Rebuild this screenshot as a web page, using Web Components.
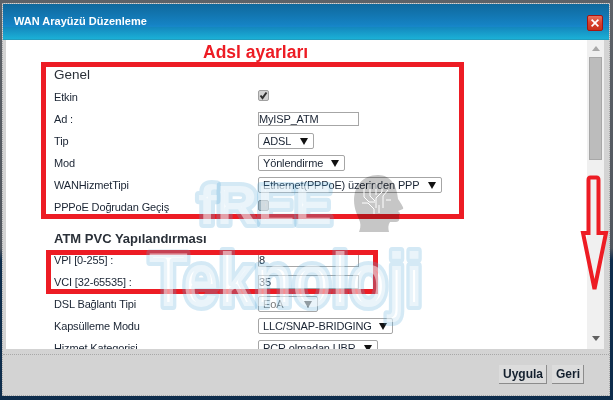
<!DOCTYPE html>
<html lang="tr">
<head>
<meta charset="utf-8">
<title>WAN Arayüzü Düzenleme</title>
<style>
html, body { margin: 0; height: 400px; overflow: hidden; }
body {
    box-sizing: border-box;
    padding-top: 3px;
    background: linear-gradient(#5d6268 0, #50565e 62%, #0e2d4c 65%);
    font-family: "Liberation Sans", Arial, sans-serif;
    position: relative;
}
</style>
</head>
<body>
<wan-dialog heading="WAN Arayüzü Düzenleme">
  <section-title>Genel</section-title>
  <form-row label="Etkin"><check-box checked></check-box></form-row>
  <form-row label="Ad :"><text-box width="101">MyISP_ATM</text-box></form-row>
  <form-row label="Tip"><select-box width="56">ADSL</select-box></form-row>
  <form-row label="Mod"><select-box width="87">Yönlendirme</select-box></form-row>
  <form-row label="WANHizmetTipi"><select-box width="184">Ethernet(PPPoE) üzerinden PPP</select-box></form-row>
  <form-row label="PPPoE Doğrudan Geçiş"><check-box disabled></check-box></form-row>
  <section-title strong>ATM PVC Yapılandırması</section-title>
  <form-row label="VPI [0-255] :"><text-box width="101">8</text-box></form-row>
  <form-row label="VCI [32-65535] :"><text-box width="101">35</text-box></form-row>
  <form-row label="DSL Bağlantı Tipi"><select-box width="60" disabled>EoA</select-box></form-row>
  <form-row label="Kapsülleme Modu"><select-box width="135">LLC/SNAP-BRIDGING</select-box></form-row>
  <form-row label="Hizmet Kategorisi"><select-box width="120">PCR olmadan UBR</select-box></form-row>
  <dialog-button slot="actions">Uygula</dialog-button>
  <dialog-button slot="actions">Geri</dialog-button>
</wan-dialog>
<photo-notes></photo-notes>

<script>
class WanDialog extends HTMLElement {
    constructor() {
        super();
        this.attachShadow({ mode: 'open' });
    }

    connectedCallback() {
        this.shadowRoot.innerHTML = `<style>
        :host {
            display: flex;
            flex-direction: column;
            box-sizing: border-box;
            width: 608px;
            height: 393px;
            margin-left: 2px;
            border: 1px dotted #a8a8a8;
            background: #d3d3d3;
        }
        .head {
            flex: none;
            height: 36px;
            box-sizing: border-box;
            display: flex;
            align-items: center;
            justify-content: space-between;
            padding: 0 6px 2px 11px;
            background: linear-gradient(#0f689c 0, #1583c4 58%, #1887cc 62%, #1487bd 64%, #1bb0d6 97%, #2a8ca8 100%);
            color: #fff;
            font: bold 11px "Liberation Sans", Arial, sans-serif;
        }
        .close {
            align-self: flex-start;
            width: 14px;
            height: 14px;
            margin-top: 11px;
            border: 1px solid #a81410;
            border-radius: 2px;
            background: linear-gradient(#e8705c, #d8402c 50%, #c8301c);
            display: flex;
        }
        .main {
            flex: 1;
            min-height: 0;
            display: flex;
            margin: 0 5px 0 3px;
            background: #fff;
        }
        .form {
            flex: 1;
            overflow: hidden;
            padding: 23px 0 0 48px;
            color: #1a2433;
            font-size: 11px;
            letter-spacing: -.15px;
        }
        .bar {
            width: 17px;
            box-sizing: border-box;
            background: #f0f0f0;
            display: flex;
            flex-direction: column;
            align-items: center;
            padding-top: 6px;
            padding-bottom: 8px;
        }
        .thumb {
            width: 13px;
            height: 103px;
            box-sizing: border-box;
            background: #bcbcbc;
            border: 1px solid #a8a8a8;
            margin-top: 6px;
            margin-bottom: auto;
        }
        .up { width: 0; height: 0; border: 4px solid transparent; border-top: 0; border-bottom: 5px solid #a8a8a8; }
        .down { width: 0; height: 0; border: 4px solid transparent; border-bottom: 0; border-top: 5px solid #606060; }
        .foot {
            flex: none;
            height: 46px;
            box-sizing: border-box;
            padding-top: 5px;
        }
        .actions {
            display: flex;
            justify-content: flex-end;
            align-items: flex-start;
            gap: 5px;
            padding: 10px 25px 0 0;
            border-top: 1px dotted #a8a8a8;
        }
        </style>
        <div class="head">
            <span>${this.getAttribute('heading')}</span>
            <span class="close"><svg width="14" height="14" viewBox="0 0 14 14"><path d="M3 4.200 4.200 3 7 5.800 9.800 3 11 4.200 8.200 7 11 9.800 9.800 11 7 8.200 4.200 11 3 9.800 5.800 7z" fill="#fff"/></svg></span>
        </div>
        <div class="main">
            <div class="form"><slot></slot></div>
            <div class="bar"><i class="up"></i><i class="thumb"></i><i class="down"></i></div>
        </div>
        <div class="foot"><div class="actions"><slot name="actions"></slot></div></div>`;
    }
}

class SectionTitle extends HTMLElement {
    constructor() {
        super();
        this.attachShadow({ mode: 'open' });
        this.shadowRoot.innerHTML = `<style>
        :host {
            display: flex;
            align-items: center;
            height: 23px;
            font-size: 13.500px;
            letter-spacing: 0;
            color: #2a3038;
        }
        :host([strong]) {
            font-weight: bold;
            font-size: 13px;
            height: 26px;
            margin-top: 7px;
            margin-bottom: -2px;
        }
        </style><slot></slot>`;
    }
}

class FormRow extends HTMLElement {
    constructor() {
        super();
        this.attachShadow({ mode: 'open' });
    }

    connectedCallback() {
        this.shadowRoot.innerHTML = `<style>
        :host {
            display: grid;
            grid-template-columns: 204px 1fr;
            align-items: center;
            height: 22px;
        }
        </style><span>${this.getAttribute('label')}</span><div><slot></slot></div>`;
    }
}

class CheckBox extends HTMLElement {
    constructor() {
        super();
        this.attachShadow({ mode: 'open' });
    }

    connectedCallback() {
        const tick = this.hasAttribute('checked')
            ? '<svg width="9" height="9" viewBox="0 0 9 9"><path d="M1.500 4.500 3.500 7 7.500 1.500" fill="none" stroke="#303030" stroke-width="2"/></svg>'
            : '';
        this.shadowRoot.innerHTML = `<style>
        :host {
            display: flex;
            width: 9px;
            height: 9px;
            margin-bottom: 3px;
            border-radius: 2px;
            border: 1px solid #a0a0a0;
            background: #d4d4d4;
        }
        :host([disabled]) { background: #bcbcbc; border-color: #8a8a8a; }
        </style>${tick}`;
    }
}

class TextBox extends HTMLElement {
    constructor() {
        super();
        this.attachShadow({ mode: 'open' });
    }

    connectedCallback() {
        this.shadowRoot.innerHTML = `<style>
        :host {
            display: flex;
            align-items: center;
            box-sizing: border-box;
            width: ${this.getAttribute('width')}px;
            height: 14px;
            border: 1px solid #a6a6a6;
            color: #1a2433;
        }
        </style><slot></slot>`;
    }
}

class SelectBox extends HTMLElement {
    constructor() {
        super();
        this.attachShadow({ mode: 'open' });
    }

    connectedCallback() {
        this.shadowRoot.innerHTML = `<style>
        :host {
            display: flex;
            align-items: center;
            justify-content: space-between;
            box-sizing: border-box;
            width: ${this.getAttribute('width')}px;
            height: 16px;
            padding: 0 5px 0 4px;
            border: 1px solid #a6a6a6;
            border-radius: 2px;
            background: #fff;
            color: #1a2433;
            white-space: nowrap;
        }
        :host([disabled]) { color: #7a7a7a; }
        .arrow {
            width: 0;
            height: 0;
            border: 4px solid transparent;
            border-bottom: 0;
            border-top: 7px solid #111;
        }
        </style><slot></slot><i class="arrow"></i>`;
    }
}

class DialogButton extends HTMLElement {
    constructor() {
        super();
        this.attachShadow({ mode: 'open' });
        this.shadowRoot.innerHTML = `<style>
        :host {
            display: flex;
            align-items: center;
            box-sizing: border-box;
            height: 19px;
            padding: 0 3px 0 4px;
            background: #dcdcdc;
            border-right: 1px solid #8c8c8c;
            border-bottom: 1px solid #8c8c8c;
            color: #14202e;
            font: bold 12px "Liberation Sans", Arial, sans-serif;
        }
        </style><slot></slot>`;
    }
}

// hand annotations and the watermark lie over the screenshot
class PhotoNotes extends HTMLElement {
    constructor() {
        super();
        this.attachShadow({ mode: 'open' });
        this.shadowRoot.innerHTML = `<style>
        :host {
            position: absolute;
            left: 0;
            top: 0;
            width: 613px;
            height: 400px;
            pointer-events: none;
        }
        svg { position: absolute; left: 0; top: 0; }
        .caption { font: bold 17.500px "Liberation Sans", Arial, sans-serif; fill: #ed1c24; }
        .mark {
            font-family: "Liberation Sans", sans-serif;
            font-weight: bold;
            fill: rgba(255,255,255,.5);
            stroke: rgba(90,170,215,.26);
            stroke-width: 8px;
            paint-order: stroke;
            stroke-linejoin: round;
        }
        .head { mix-blend-mode: multiply; }
        </style>
        <svg width="613" height="400" viewBox="0 0 613 400">
            <text class="caption" x="203" y="58">Adsl ayarları</text>
            <g fill="none" stroke="#ed1c24">
                <rect x="43.500" y="64.500" width="418" height="152" stroke-width="5"/>
                <rect x="48.500" y="252.500" width="327" height="39" stroke-width="5"/>
                <path d="M588.500 233V180q0-2.500 2-2.500h6q2 0 2 2.500v53h7.500L594.500 289 583 233z" stroke-width="4"/>
            </g>
            <text class="mark" x="198" y="224" font-size="56" textLength="134" lengthAdjust="spacingAndGlyphs">fREE</text>
            <text class="mark" x="149" y="306" font-size="76" textLength="274" lengthAdjust="spacingAndGlyphs">Teknoloji</text>
            <path class="head" d="M378 175C362 175 354 187 354 200 354 210 358 216 360 222 361 226 360 229 359 232L389 232C388 228 388 225 390 222L396 222C399 222 400 219 399 216L400 213 398 211 403 209C404 208 402 205 398 199 397 186 391 175 378 175Z" fill="#c6c6c6"/>
            <path d="M364 189v8l5 5h6M370 184v12l5 5M376 183v12M382 184v8l-6 6v10M388 190l-5 6v12M362 203h6l6 6v5M386 200h5M379 213v-8" fill="none" stroke="#fff" stroke-width="1"/>
        </svg>`;
    }
}

customElements.define('wan-dialog', WanDialog);
customElements.define('section-title', SectionTitle);
customElements.define('form-row', FormRow);
customElements.define('check-box', CheckBox);
customElements.define('text-box', TextBox);
customElements.define('select-box', SelectBox);
customElements.define('dialog-button', DialogButton);
customElements.define('photo-notes', PhotoNotes);
</script>
</body>
</html>
